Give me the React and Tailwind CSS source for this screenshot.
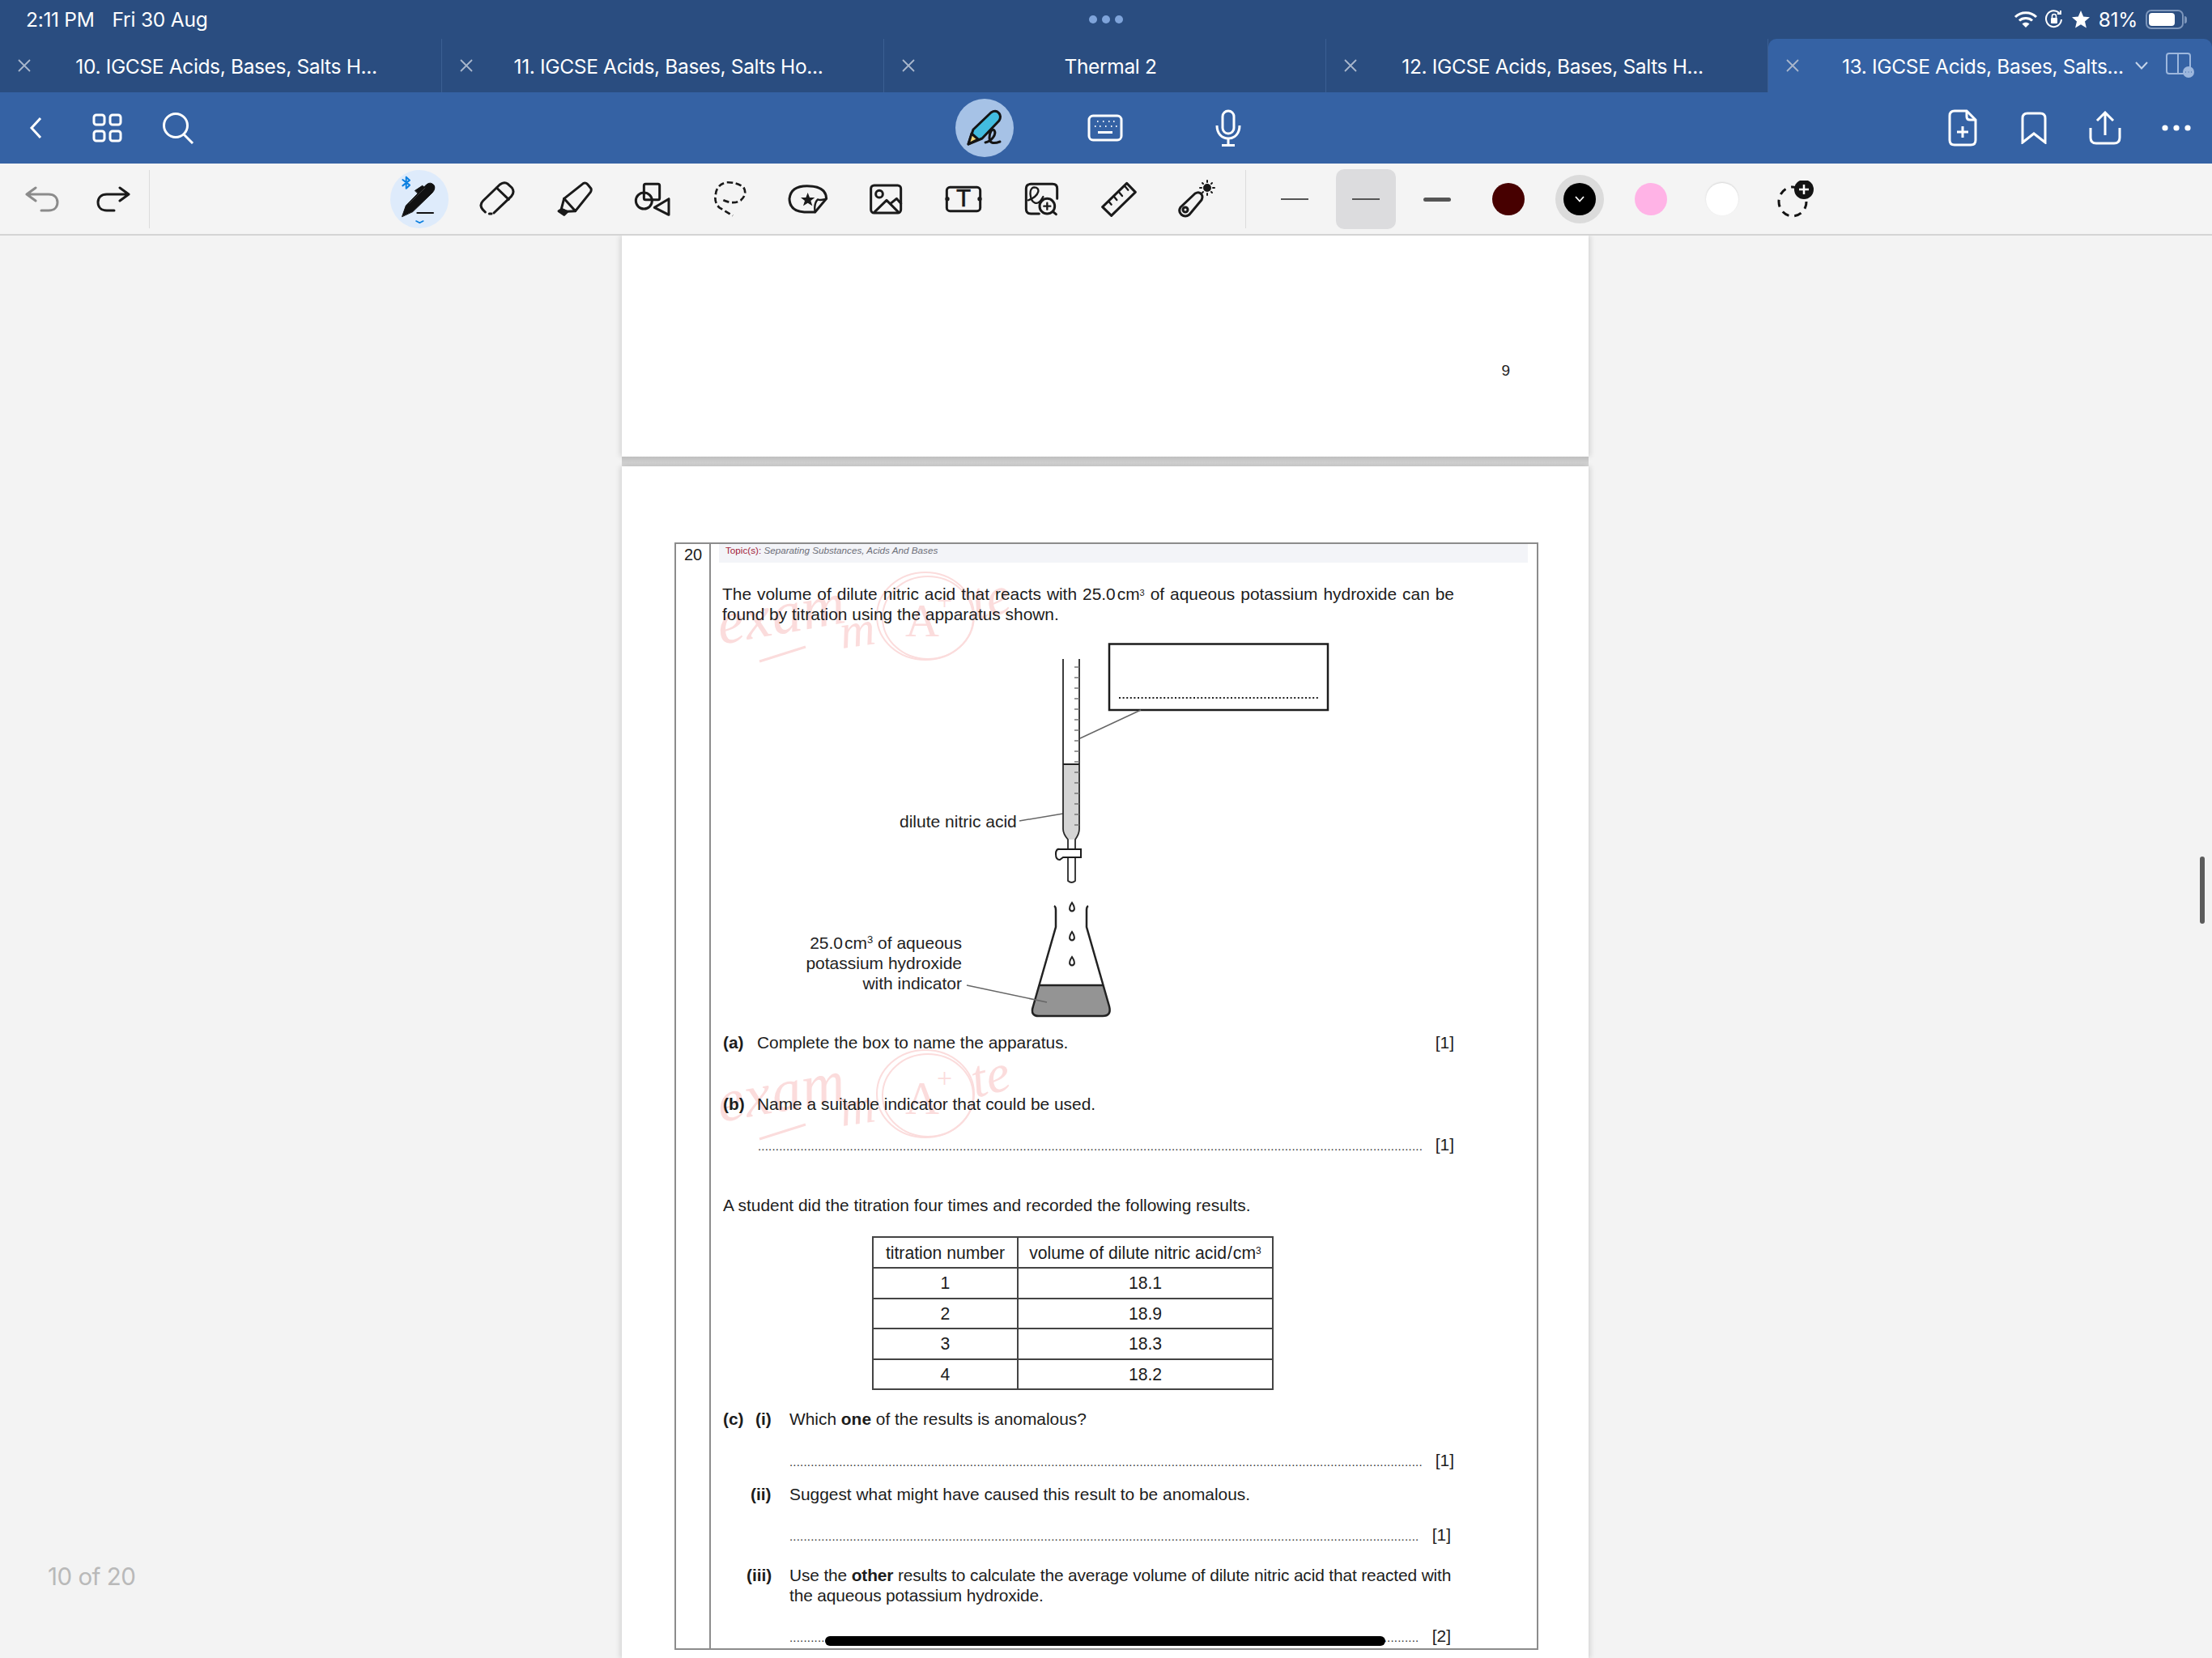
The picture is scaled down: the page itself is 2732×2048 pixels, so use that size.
import React from 'react';

const docFont = "font-['Liberation_Sans',Arial,sans-serif]";

const tabs = [
  '10. IGCSE Acids, Bases, Salts H...',
  '11. IGCSE Acids, Bases, Salts Ho...',
  'Thermal 2',
  '12. IGCSE Acids, Bases, Salts H...',
];

const CloseX = () => (
  <svg width="16" height="16" viewBox="0 0 16 16" fill="none" stroke="#a9b7cc" strokeWidth="1.8">
    <path d="M1 1 L15 15 M15 1 L1 15" />
  </svg>
);

const StatusBar = () => (
  <div className="h-[48px] bg-[#2a4d80] flex items-center text-white text-[24.5px] font-['Inter',sans-serif] shrink-0">
    <span className="ml-[32px] tracking-[-0.3px]">2:11 PM</span>
    <span className="ml-[22px] tracking-[-0.2px]">Fri 30 Aug</span>
    <div className="ml-[1088px] flex gap-[6px]">
      <span className="w-[10px] h-[10px] rounded-full bg-[#7fa4da]" />
      <span className="w-[10px] h-[10px] rounded-full bg-[#7fa4da]" />
      <span className="w-[10px] h-[10px] rounded-full bg-[#7fa4da]" />
    </div>
    <div className="ml-auto mr-[31px] flex items-center">
      <svg width="30" height="22" viewBox="0 0 30 22" fill="none" stroke="white" strokeWidth="3">
        <path d="M2 8 C9 1 21 1 28 8" />
        <path d="M7 12.5 C11 8.5 19 8.5 23 12.5" />
        <path d="M15 21 L10.5 16.5 C13 14 17 14 19.5 16.5 Z" fill="white" stroke="none" />
      </svg>
      <svg className="ml-[9px]" width="22" height="24" viewBox="0 0 22 24" fill="none" stroke="white" strokeWidth="2">
        <path d="M18 5 A9.5 10 0 1 0 20 12" />
        <path d="M15 5 L19 5 L19 1" />
        <rect x="7" y="10" width="8" height="7" rx="1" fill="white" stroke="none" />
        <path d="M8.5 10 V8 A2.5 2.5 0 0 1 13.5 8 V10" strokeWidth="1.6" />
      </svg>
      <svg className="ml-[10px]" width="24" height="24" viewBox="0 0 24 24" fill="white">
        <path d="M12 1 L15.2 8.6 L23 9.3 L17 14.6 L18.9 22.5 L12 18.3 L5.1 22.5 L7 14.6 L1 9.3 L8.8 8.6 Z" />
      </svg>
      <span className="ml-[10px] tracking-[-0.3px]">81%</span>
      <div className="ml-[10px] flex items-center">
        <div className="w-[47px] h-[24px] rounded-[7px] border-2 border-[#7d96bb] p-[2px]">
          <div className="w-[32px] h-full rounded-[4px] bg-white" />
        </div>
        <div className="w-[3px] h-[9px] rounded-r-full bg-[#7d96bb] ml-[1px]" />
      </div>
    </div>
  </div>
);

const TabBar = () => (
  <div className="h-[66px] bg-[#2a4d80] grid grid-cols-[546px_546px_546px_546px_548px] text-white text-[24.5px] font-['Inter',sans-serif] shrink-0">
    {tabs.map((t) => (
      <div key={t} className="flex items-center border-r border-[#3b5f93]">
        <div className="w-[50px] pl-[22px]"><CloseX /></div>
        <div className="flex-1 text-center whitespace-nowrap tracking-[-0.35px] pt-[2px]">{t}</div>
        <div className="w-[36px]" />
      </div>
    ))}
    <div className="flex items-center bg-[#3562a4] rounded-t-[10px]">
      <div className="pl-[22px]"><CloseX /></div>
      <div className="ml-[53px] whitespace-nowrap tracking-[-0.35px] pt-[2px]">13. IGCSE Acids, Bases, Salts...</div>
      <svg className="ml-[14px]" width="16" height="10" viewBox="0 0 16 10" fill="none" stroke="#c6d5ea" strokeWidth="2">
        <path d="M1 1 L8 8.5 L15 1" />
      </svg>
      <svg className="ml-[22px]" width="36" height="32" viewBox="0 0 36 32" fill="none" stroke="#9db7dd" strokeWidth="2">
        <rect x="1" y="1" width="29" height="25" rx="3" />
        <path d="M15 1 V26" />
        <circle cx="28" cy="24" r="7" fill="#9db7dd" stroke="none" />
        <path d="M24.5 24 H25 M27.8 24 H28.3 M31 24 H31.5" stroke="#3562a4" />
      </svg>
    </div>
  </div>
);

const Cell = ({ className = 'w-[88px]', children }) => (
  <div className={`${className} h-full flex items-center justify-center shrink-0`}>{children}</div>
);

const MainToolbar = () => (
  <div className="h-[88px] bg-[#3562a4] grid grid-cols-[1fr_auto_1fr] items-center shrink-0">
    <div className="flex h-full">
      <Cell>
        <svg width="16" height="28" viewBox="0 0 16 28" fill="none" stroke="white" strokeWidth="3">
          <path d="M14 2 L3 14 L14 26" />
        </svg>
      </Cell>
      <Cell>
        <svg width="37" height="36" viewBox="0 0 37 36" fill="none" stroke="white" strokeWidth="3">
          <rect x="2" y="2" width="13" height="12" rx="3" />
          <rect x="22" y="2" width="13" height="12" rx="3" />
          <rect x="2" y="22" width="13" height="12" rx="3" />
          <rect x="22" y="22" width="13" height="12" rx="3" />
        </svg>
      </Cell>
      <Cell>
        <svg width="40" height="40" viewBox="0 0 40 40" fill="none" stroke="white" strokeWidth="3">
          <circle cx="17" cy="17" r="14.5" />
          <path d="M27 28 L38 39" />
        </svg>
      </Cell>
    </div>
    <div className="flex h-full ml-[4px]">
      <Cell className="w-[148px]">
        <div className="w-[72px] h-[72px] rounded-full bg-[#a6c2e6] flex items-center justify-center">
          <svg width="72" height="72" viewBox="0 0 72 72" fill="none" stroke="#141414" strokeWidth="3" strokeLinejoin="round" strokeLinecap="round">
            <path d="M16 56 L22 38 L44 17 Q50 13 54 18 Q57 22 54 27 L33 49 Z" fill="#42bcdf" />
            <path d="M16 56 L20 43 L28 50 Z" fill="#f0d77a" />
            <path d="M37 54 C45 52 51 44 48 39 C45 36 42 42 42 48 C42 55 47 56 55 53" />
          </svg>
        </div>
      </Cell>
      <Cell className="w-[150px]">
        <svg width="44" height="34" viewBox="0 0 44 34" fill="none" stroke="white" strokeWidth="3">
          <rect x="2" y="2" width="40" height="30" rx="5" />
          <path d="M13 22.5 H31" />
          <path d="M12 9 H13.5 M19 9 H20.5 M26 9 H27.5 M32 9 H33.5 M9 15 H10.5 M15 15 H16.5 M22 15 H23.5 M29 15 H30.5 M35 15 H36.5" strokeWidth="2" />
        </svg>
      </Cell>
      <Cell className="w-[154px]">
        <svg width="32" height="46" viewBox="0 0 32 46" fill="none" stroke="white" strokeWidth="3">
          <rect x="9" y="2" width="14" height="28" rx="7" />
          <path d="M2 20 C2 30 8 36 16 36 C24 36 30 30 30 20" />
          <path d="M16 36 V44 M8 44.5 H24" />
        </svg>
      </Cell>
    </div>
    <div className="flex h-full justify-end">
      <Cell>
        <svg width="36" height="46" viewBox="0 0 36 46" fill="none" stroke="white" strokeWidth="3">
          <path d="M23 2 H8 Q2 2 2 8 V38 Q2 44 8 44 H28 Q34 44 34 38 V13 Z" />
          <path d="M23 2 V9 Q23 13 27 13 H34" />
          <path d="M18 21 V35 M11 28 H25" />
        </svg>
      </Cell>
      <Cell>
        <svg width="32" height="40" viewBox="0 0 32 40" fill="none" stroke="white" strokeWidth="3">
          <path d="M2 38 V8 Q2 2 8 2 H24 Q30 2 30 8 V38 L16 27 Z" />
        </svg>
      </Cell>
      <Cell>
        <svg width="40" height="42" viewBox="0 0 40 42" fill="none" stroke="white" strokeWidth="3">
          <path d="M20 30 V3 M10 12 L20 2 L30 12" />
          <path d="M2 21 V33 Q2 40 9 40 H31 Q38 40 38 33 V21" />
        </svg>
      </Cell>
      <Cell>
        <svg width="36" height="8" viewBox="0 0 36 8" fill="white">
          <circle cx="4" cy="4" r="3.6" />
          <circle cx="18" cy="4" r="3.6" />
          <circle cx="32" cy="4" r="3.6" />
        </svg>
      </Cell>
    </div>
  </div>
);

const stroke = { fill: 'none', stroke: '#1a1a1a', strokeWidth: 3, strokeLinejoin: 'round', strokeLinecap: 'round' };

// tool cells are 96x88; icons are drawn in 3x units measured from the toolbar
const Tool = ({ k, origin, children }) => (
  <Cell className="w-[96px]">
    <svg
      width="96"
      height="88"
      viewBox={`${(470 + 96 * k - origin) * 3} -18 288 264`}
      fill="none"
      stroke="#1a1a1a"
      strokeWidth="9"
      strokeLinejoin="round"
      strokeLinecap="round"
    >
      {children}
    </svg>
  </Cell>
);

const ToolsRow = () => (
  <div className="h-[89px] bg-[#f4f4f4] border-b-2 border-[#d4d4d4] flex shrink-0">
    <div className="ml-[8px] flex h-[88px] items-center">
      <Cell className="w-[88px]">
        <svg width="42" height="32" viewBox="0 0 42 32" stroke="#8b8b8b" fill="none" strokeWidth="3" strokeLinecap="round" strokeLinejoin="round">
          <path d="M13 2 L2 10 L13 18 M2 10 H29 C36 10 40 14 40 20 C40 26 36 30 29 30 H20" />
        </svg>
      </Cell>
      <Cell className="w-[88px]">
        <svg width="42" height="32" viewBox="0 0 42 32" {...stroke}>
          <path d="M29 2 L40 10 L29 18 M40 10 H13 C6 10 2 14 2 20 C2 26 6 30 13 30 H22" />
        </svg>
      </Cell>
    </div>
    <div className="w-px h-[72px] mt-[8px] bg-[#dcdcdc]" />
    <div className="ml-[285px] flex h-[88px] items-center">
      <Tool k={0} origin={480}>
        <circle cx="114" cy="114" r="108" fill="#deebfb" stroke="none" />
        <path d="M65 32 V74 L78 62 L52 42 M52 64 L78 44 L65 32" stroke="#0a7fe0" strokeWidth="6" />
        <path d="M50 178 L64 138 L140 60 Q155 48 168 62 Q175 75 162 90 L90 160 Z" fill="#111" stroke="#111" strokeWidth="3" />
        <path d="M98 82 L125 64 L135 72 L110 94 Z" fill="#111" stroke="#111" strokeWidth="3" />
        <path d="M76 130 L135 72" stroke="#555" strokeWidth="2" />
        <path d="M106 165 H165" stroke="#111" strokeWidth="6" />
        <path d="M102 195 L115 202 L128 195" stroke="#0a7fe0" strokeWidth="5" />
      </Tool>
      <Tool k={1} origin={480}>
        <path d="M390 165 L455 103 Q468 88 457 72 L442 58 Q428 48 412 60 L350 120 Q335 135 348 152 L358 162" />
        <path d="M400 72 L445 115" />
        <path d="M373 168 H381" />
      </Tool>
      <Tool k={2} origin={480}>
        <path d="M650 112 L722 55 Q732 52 738 60 L750 75 Q752 82 748 88 L692 158 Z" />
        <path d="M650 112 L640 150 L660 160 L692 158" />
        <path d="M640 152 L630 158 L650 172 L662 160 Z" fill="#1a1a1a" />
      </Tool>
      <Tool k={3} origin={480}>
        <rect x="946" y="58" width="58" height="58" rx="6" />
        <circle cx="946" cy="120" r="30" />
        <path d="M985 145 L1038 113 V172 Z" />
      </Tool>
      <Tool k={4} origin={480}>
        <path
          d="M1240 118 Q1280 135 1305 118 Q1330 95 1315 70 Q1290 50 1250 52 Q1215 62 1212 95 Q1205 125 1225 145 Q1250 160 1275 175"
          strokeDasharray="22 11"
          strokeWidth="8"
          strokeLinecap="butt"
        />
      </Tool>
      <Tool k={5} origin={960}>
        <path d="M140 162 H100 Q45 158 45 112 Q50 65 110 65 Q180 65 182 112 L140 162" />
        <path d="M182 112 Q162 120 150 115 Q135 130 140 162" strokeWidth="7" />
        <path d="M113 90 L120 108 L139 108 L124 120 L130 139 L113 128 L96 139 L102 120 L87 108 L106 108 Z" fill="#1a1a1a" stroke="none" />
      </Tool>
      <Tool k={6} origin={960}>
        <rect x="347" y="63" width="111" height="102" rx="12" />
        <circle cx="378" cy="95" r="13" />
        <path d="M362 160 L405 118 L447 160 M420 130 L442 112 L458 130" />
      </Tool>
      <Tool k={7} origin={960}>
        <rect x="628" y="70" width="124" height="88" rx="12" />
        <circle cx="630" cy="113" r="8" fill="#1a1a1a" stroke="none" />
        <circle cx="750" cy="113" r="8" fill="#1a1a1a" stroke="none" />
        <text x="690" y="142" textAnchor="middle" fontFamily="Liberation Mono, monospace" fontSize="96" fill="#1a1a1a" stroke="#1a1a1a" strokeWidth="1.5">T</text>
      </Tool>
      <Tool k={8} origin={960}>
        <path d="M970 168 H940 Q922 168 922 150 V75 Q922 58 940 58 H1020 Q1037 58 1037 75 V112" />
        <path d="M930 118 C975 100 975 70 952 70 C930 72 935 120 955 128 C968 132 975 122 985 105" strokeWidth="7" />
        <circle cx="1000" cy="140" r="28" />
        <path d="M1021 160 L1033 170" />
        <path d="M1000 128 V152 M988 140 H1012" strokeWidth="7" />
      </Tool>
      <Tool k={9} origin={960}>
        <path d="M1295 55 L1327 88 L1238 175 L1205 143 Z" />
        <path d="M1228 122 L1238 134 M1248 105 L1258 117 M1268 90 L1278 102 M1290 68 L1300 80" strokeWidth="7" />
      </Tool>
      <Cell className="w-[96px]">
        <svg width="48" height="48" viewBox="0 0 48 48" {...stroke}>
          <path d="M22 17 Q27 14 30 18 Q32 21 30 25 L15 43 Q10 47 5 43 Q1 39 4 34 Z" />
          <circle cx="10" cy="37" r="3" />
          <circle cx="37" cy="10" r="3.5" fill="#1a1a1a" />
          <path d="M37 1 V3 M37 17 V19 M28 10 H30 M44 10 H46 M31 4 L32 5 M42 15 L43 16 M43 4 L42 5 M31 16 L32 15" strokeWidth="2" />
        </svg>
      </Cell>
    </div>
    <div className="ml-[12px] w-px h-[72px] mt-[8px] bg-[#dcdcdc]" />
    <div className="ml-[16px] flex h-[88px] items-center">
      <Cell className="w-[88px]"><div className="w-[34px] h-[2px] bg-[#555]" /></Cell>
      <Cell className="w-[88px]">
        <div className="w-[74px] h-[74px] rounded-[10px] bg-[#dcdcde] flex items-center justify-center">
          <div className="w-[34px] h-[2px] bg-[#555]" />
        </div>
      </Cell>
      <Cell className="w-[88px]"><div className="w-[34px] h-[5px] rounded-full bg-[#555]" /></Cell>
      <Cell className="w-[88px]"><div className="w-[40px] h-[40px] rounded-full bg-[#470000]" /></Cell>
      <Cell className="w-[88px]">
        <div className="w-[60px] h-[60px] rounded-full bg-[#dbdbdb] flex items-center justify-center">
          <div className="w-[40px] h-[40px] rounded-full bg-black flex items-center justify-center">
            <svg width="12" height="8" viewBox="0 0 12 8" fill="none" stroke="white" strokeWidth="1.8">
              <path d="M1 1 L6 6.5 L11 1" />
            </svg>
          </div>
        </div>
      </Cell>
      <Cell className="w-[88px]"><div className="w-[40px] h-[40px] rounded-full bg-[#ffb3e6]" /></Cell>
      <Cell className="w-[88px]"><div className="w-[40px] h-[40px] rounded-full bg-white shadow-[0_-1px_2px_rgba(0,0,0,0.12)]" /></Cell>
      <Cell className="w-[88px]">
        <svg className="ml-[6px]" width="46" height="46" viewBox="0 0 46 46">
          <ellipse cx="19" cy="26" rx="17" ry="18" fill="none" stroke="#141414" strokeWidth="3" strokeDasharray="9 7" />
          <circle cx="33" cy="11" r="12" fill="#141414" />
          <path d="M33 5 V17 M27 11 H39" stroke="white" strokeWidth="2.5" />
        </svg>
      </Cell>
    </div>
  </div>
);

// faint pink stamp sitting behind the exam text
const Watermark = ({ className }) => (
  <svg className={`absolute pointer-events-none ${className}`} width="400" height="140" viewBox="880 690 400 140">
    <g fill="#fbdcdc" fontFamily="Liberation Serif, serif" fontStyle="italic">
      <text x="890" y="795" fontSize="74" letterSpacing="1" transform="rotate(-10 890 795)">exam</text>
      <text x="1205" y="765" fontSize="66" transform="rotate(-14 1205 765)">te</text>
      <text x="1040" y="800" fontSize="60" transform="rotate(-8 1040 800)">m</text>
      <text x="1118" y="785" fontSize="58" fontStyle="normal">A</text>
      <text x="1157" y="752" fontSize="34" fontStyle="normal">+</text>
    </g>
    <g fill="none" stroke="#fbdcdc" strokeWidth="2">
      <ellipse cx="1143" cy="760" rx="60" ry="54" />
      <ellipse cx="1146" cy="762" rx="56" ry="51" />
      <path d="M938 816 L995 798" strokeWidth="3" />
    </g>
  </svg>
);

const Diagram = () => (
  <svg className="block" width="1021" height="495" viewBox="878 780 1021 495">
    <rect x="1370" y="795.5" width="270" height="81.5" fill="white" stroke="#1c1c1c" strokeWidth="2.5" />
    <path d="M1382 862 H1628" stroke="#222" strokeWidth="2" strokeDasharray="2 2.6" />
    <path d="M1409 877 L1334 912 M1259 1014 L1319 1004" stroke="#666" strokeWidth="1.5" fill="none" />
    {/* burette */}
    <path d="M1313 944 H1333 V1024 Q1333 1030 1328 1037 H1319 Q1313 1030 1313 1024 Z" fill="#d4d4d4" />
    <path d="M1313 814 V1024 Q1313 1030 1319 1037 V1088 Q1323.5 1092 1328 1088 V1037 Q1333 1030 1333 1024 V814" fill="none" stroke="#2a2a2a" strokeWidth="1.8" />
    <path d="M1313 944 H1333" stroke="#222" strokeWidth="2" />
    <path d="M1327 824 h6 M1327 837 h6 M1327 850 h6 M1327 863 h6 M1327 876 h6 M1327 889 h6 M1327 902 h6 M1327 915 h6 M1327 928 h6 M1327 941 h6 M1327 954 h6 M1327 967 h6 M1327 980 h6 M1327 993 h6 M1327 1006 h6 M1327 1019 h6" stroke="#777" strokeWidth="1.4" />
    <path d="M1309 1049 H1335 V1059 H1313 L1309 1062 Q1304 1062 1304 1055 Q1304 1048 1309 1049 Z" fill="white" stroke="#1c1c1c" strokeWidth="2" />
    {/* flask */}
    <path d="M1284 1217 H1362 L1370 1245 Q1372 1255 1363 1255 H1282 Q1272 1255 1275 1245 Z" fill="#949494" />
    <path d="M1302 1119 Q1304 1120 1304 1124 V1145 L1276 1243 Q1272 1255 1283 1255 H1362 Q1373 1255 1370 1243 L1342 1145 V1124 Q1342 1120 1344 1119" fill="none" stroke="#222" strokeWidth="2.5" />
    <path d="M1284 1217 H1362" stroke="#222" strokeWidth="2.5" />
    <path d="M1194 1217 L1293 1238" stroke="#666" strokeWidth="1.5" fill="none" />
    <path d="M1324 1115 Q1328 1121 1326.5 1124 Q1324 1127 1321.5 1124 Q1320 1121 1324 1115 Z" fill="white" stroke="#222" strokeWidth="2" />
    <path d="M1324 1151 Q1328 1157 1326.5 1160 Q1324 1163 1321.5 1160 Q1320 1157 1324 1151 Z" fill="white" stroke="#222" strokeWidth="2" />
    <path d="M1324 1182 Q1328 1188 1326.5 1191 Q1324 1194 1321.5 1191 Q1320 1188 1324 1182 Z" fill="white" stroke="#222" strokeWidth="2" />
    <g fontFamily="Liberation Sans, Arial, sans-serif" fontSize="21" fill="#222">
      <text x="1111" y="1022">dilute nitric acid</text>
      <text x="1188" y="1172" textAnchor="end">25.0<tspan dx="2">cm</tspan><tspan fontSize="13" dy="-7">3</tspan><tspan dy="7"> of aqueous</tspan></text>
      <text x="1188" y="1197" textAnchor="end">potassium hydroxide</text>
      <text x="1188" y="1222" textAnchor="end">with indicator</text>
    </g>
  </svg>
);

const AnswerLine = ({ className = '', left = 'ml-[44px]', mark = '[1]', right = 'mr-[102px]', dots = 188 }) => (
  <div className={`flex h-[25px] leading-[25px] pl-[14px] ${className} ${right}`}>
    <div className={`${left} flex-1 min-w-0 whitespace-nowrap text-[15px] leading-[30px] tracking-[0.2px] text-[#333]`}>
      {'.'.repeat(dots)}
    </div>
    <span className="ml-[14px]">{mark}</span>
  </div>
);

const rows = [
  ['1', '18.1'],
  ['2', '18.9'],
  ['3', '18.3'],
  ['4', '18.2'],
];

const ResultsTable = () => (
  <table className="ml-[199px] mt-[26px] w-[496px] h-[189px] border-collapse border-2 border-[#444] text-[21.2px] text-center table-fixed">
    <thead>
      <tr className="h-[38px]">
        <th className="w-[179px] border-2 border-[#444] font-normal whitespace-nowrap">titration number</th>
        <th className="border-2 border-[#444] font-normal whitespace-nowrap">
          volume of dilute nitric acid<span className="mx-[1px]">/</span>cm<sup className="text-[12px]">3</sup>
        </th>
      </tr>
    </thead>
    <tbody>
      {rows.map(([n, v]) => (
        <tr key={n} className="h-[37.5px]">
          <td className="border-2 border-[#444]">{n}</td>
          <td className="border-2 border-[#444]">{v}</td>
        </tr>
      ))}
    </tbody>
  </table>
);

const Question = () => (
  <div className={`relative ml-[65px] w-[1067px] h-[1368px] border-2 border-[#8c8c8c] flex text-[20.9px] leading-[25px] text-[#1c1c1c] ${docFont}`}>
    <div className="w-[43px] border-r-2 border-[#8c8c8c] pl-[10px] pt-[1px] text-[20px] shrink-0">20</div>
    <div className="flex-1 min-w-0">
      <div className="ml-[10px] mr-[11px] h-[23px] bg-[#f3f4f8] pl-[8px] text-[11.7px] leading-[16px] italic text-[#6d6f78]">
        <span className="not-italic text-[#a3223a]">Topic(s):</span> Separating Substances, Acids And Bases
      </div>
      <p className="mt-[26px] pl-[14px] mr-[102px] text-justify">
        The volume of dilute nitric acid that reacts with 25.0<span className="ml-[2px]">cm</span><sup className="text-[11px]">3</sup> of aqueous potassium hydroxide can be found by titration using the apparatus shown.
      </p>
      <div className="mt-[9px]"><Diagram /></div>
      <div className="flex pl-[15px] mr-[102px] h-[25px]">
        <span className="w-[42px] font-bold">(a)</span>
        <span>Complete the box to name the apparatus.</span>
        <span className="ml-auto">[1]</span>
      </div>
      <div className="flex pl-[15px] mt-[51px] h-[25px]">
        <span className="w-[42px] font-bold">(b)</span>
        <span>Name a suitable indicator that could be used.</span>
      </div>
      <AnswerLine className="mt-[25px]" />
      <p className="mt-[50px] pl-[15px] h-[25px]">A student did the titration four times and recorded the following results.</p>
      <ResultsTable />
      <div className="flex pl-[15px] mt-[23px] h-[25px]">
        <span className="w-[40px] font-bold">(c)</span>
        <span className="w-[42px] font-bold">(i)</span>
        <span>Which <span className="font-bold">one</span> of the results is anomalous?</span>
      </div>
      <AnswerLine className="mt-[26px]" left="ml-[83px]" dots={179} />
      <div className="flex pl-[14px] mt-[17px] h-[25px]">
        <span className="w-[83px] pl-[35px] font-bold">(ii)</span>
        <span>Suggest what might have caused this result to be anomalous.</span>
      </div>
      <AnswerLine className="mt-[25px]" left="ml-[83px]" right="mr-[106px]" dots={178} />
      <div className="flex pl-[14px] mt-[25px] mr-[100px]">
        <span className="w-[83px] pl-[30px] shrink-0 font-bold">(iii)</span>
        <span className="tracking-[-0.14px]">Use the <span className="font-bold">other</span> results to calculate the average volume of dilute nitric acid that reacted with the aqueous potassium hydroxide.</span>
      </div>
      <AnswerLine className="mt-[25px]" left="ml-[83px]" mark="[2]" right="mr-[106px]" dots={178} />
    </div>
  </div>
);

const Document = () => (
  <div className="w-[1194px] ml-[768px] flex flex-col">
    <div className={`h-[273px] bg-white pt-[153px] pr-[97px] text-right text-[19px] text-[#222] shadow-[-3px_0_6px_rgba(0,0,0,0.1),3px_0_6px_rgba(0,0,0,0.1)] ${docFont}`}>
      9
    </div>
    <div className="h-[12px] bg-gradient-to-b from-[#bfbfbf] to-[#dadada]" />
    <div className="relative bg-white pt-[94px] h-[1473px] shadow-[-3px_0_6px_rgba(0,0,0,0.1),3px_0_6px_rgba(0,0,0,0.1)]">
      <Watermark className="left-[112px] top-[115px]" />
      <Watermark className="left-[112px] top-[705px]" />
      <Question />
    </div>
  </div>
);

export default function App() {
  return (
    <div className="relative w-[2732px] h-[2048px] overflow-hidden flex flex-col bg-[#f3f3f3]">
      <StatusBar />
      <TabBar />
      <MainToolbar />
      <ToolsRow />
      <div className="flex-1 min-h-0 overflow-hidden">
        <Document />
      </div>
      <div className="absolute left-[59px] top-[1925px] text-[29.5px] text-[#b9b9b9] font-['Inter',sans-serif] tracking-[-0.5px]">10 of 20</div>
      <div className="absolute left-[2717px] top-[1058px] w-[6px] h-[83px] rounded-full bg-[#5c5c5c]" />
      <div className="absolute left-[1019px] top-[2021px] w-[692px] h-[12px] rounded-full bg-black" />
    </div>
  );
}
